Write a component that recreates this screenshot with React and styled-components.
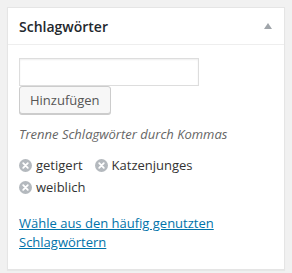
import styled, { createGlobalStyle } from 'styled-components';

const Global = createGlobalStyle`
  html, body { margin: 0; padding: 0; background: #f1f1f1; }
  body { font-family: "Open Sans", "Noto Sans", sans-serif; color: #444; font-size: 13px; }
`;

const Page = styled.div`
  padding: 7px 7px 9px 7px;
`;

const Box = styled.div`
  background: #fff;
  border: 1px solid #e5e5e5;
  box-shadow: 0 1px 1px rgba(0,0,0,.04);
`;

const Header = styled.div`
  display: flex;
  align-items: center;
  justify-content: space-between;
  height: 36px;
  padding: 0 12px 0 11px;
  border-bottom: 1px solid #eee;
`;

const Title = styled.h2`
  margin: 0;
  font-size: 14px;
  font-weight: 600;
  color: #23282d;
`;

const Arrow = styled.span`
  width: 0;
  height: 0;
  border-left: 4px solid transparent;
  border-right: 4px solid transparent;
  border-bottom: 6px solid #a0a5aa;
`;

const Inside = styled.div`
  padding: 13px 11px 17px 11px;
`;

const Input = styled.input`
  display: block;
  box-sizing: border-box;
  width: 180px;
  height: 28px;
  margin: 0;
  border: 1px solid #ddd;
  box-shadow: inset 0 1px 2px rgba(0,0,0,.07);
  outline: none;
`;

const Button = styled.button`
  display: block;
  box-sizing: border-box;
  height: 28px;
  padding: 0 10px;
  margin: 0;
  font-family: inherit;
  font-size: 13px;
  color: #555;
  background: #f7f7f7;
  border: 1px solid #ccc;
  border-radius: 3px;
  box-shadow: 0 1px 0 #ccc;
`;

const Hint = styled.p`
  margin: 11px 0 13px;
  font-style: italic;
  color: #666;
  font-size: 13px;
`;

const Tags = styled.div`
  display: flex;
  flex-wrap: wrap;
  column-gap: 12px;
  row-gap: 3px;
  width: 200px;
`;

const Tag = styled.span`
  display: inline-flex;
  align-items: center;
  gap: 4px;
  font-size: 13px;
  line-height: 19px;
  color: #333;
`;

const Remove = styled.span`
  display: inline-flex;
  width: 13px;
  height: 13px;
`;

const Link = styled.a`
  display: block;
  margin-top: 17px;
  color: #0073aa;
  text-decoration: underline;
  font-size: 13px;
  line-height: 19px;
  width: 230px;
`;

function RemoveIcon() {
  return (
    <Remove>
      <svg width="13" height="13" viewBox="0 0 13 13">
        <circle cx="6.5" cy="6.5" r="6.5" fill="#b4b9be" />
        <path d="M4.2 4.2 L8.8 8.8 M8.8 4.2 L4.2 8.8" stroke="#fff" strokeWidth="1.8" strokeLinecap="round" />
      </svg>
    </Remove>
  );
}

export default function App() {
  const tags = ['getigert', 'Katzenjunges', 'weiblich'];
  return (
    <>
      <Global />
      <Page>
        <Box>
          <Header>
            <Title>Schlagwörter</Title>
            <Arrow />
          </Header>
          <Inside>
            <Input type="text" />
            <Button>Hinzufügen</Button>
            <Hint>Trenne Schlagwörter durch Kommas</Hint>
            <Tags>
              {tags.map((t) => (
                <Tag key={t}><RemoveIcon />{t}</Tag>
              ))}
            </Tags>
            <Link href="#">Wähle aus den häufig genutzten Schlagwörtern</Link>
          </Inside>
        </Box>
      </Page>
    </>
  );
}
